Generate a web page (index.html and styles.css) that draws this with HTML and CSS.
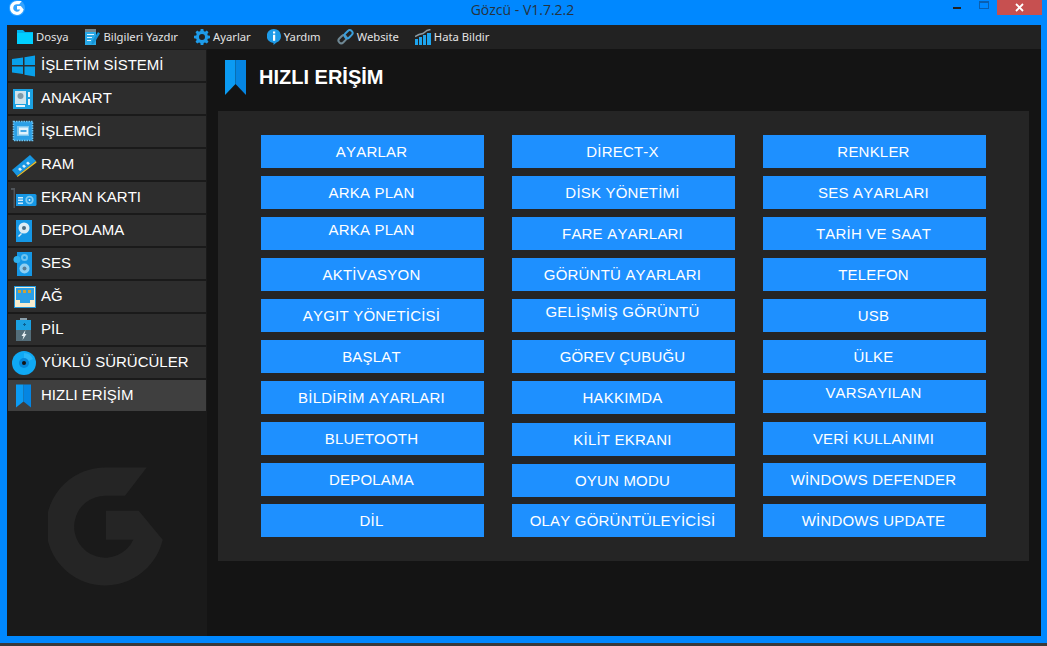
FILE: index.html
```html
<!DOCTYPE html>
<html lang="tr">
<head>
<meta charset="utf-8">
<title>Gözcü - V1.7.2.2</title>
<link rel="stylesheet" href="styles.css">
</head>
<body>
<div class="window">
  <header class="titlebar">
    <svg class="app-logo" viewBox="-10 -8 136 136"><circle cx="58" cy="60" r="68" fill="#35a4ff"/><path d="M58 .5H98.700L77 28.700H58a31 31 0 1 0 27.300 44H58V43.700h32.700l24 29A59 59 0 1 1 58 .5z" fill="#fff"/></svg>
    <div class="title">Gözcü - V1.7.2.2</div>
    <div class="controls">
      <span class="ctl-min"></span>
      <span class="ctl-max"></span>
      <span class="ctl-close"><svg viewBox="0 0 9 9" width="9" height="9"><path d="M1 1l7 7M8 1L1 8" stroke="#fff" stroke-width="1.800"/></svg></span>
    </div>
  </header>
  <div class="client">
    <nav class="menubar">
      <div class="menu-item"><svg width="16" height="14" viewBox="0 0 16 14"><path d="M0 0h6l2 2h8v12H0z" fill="#00b4ee"/><path d="M0 3h16v11H0z" fill="#00d0ff"/></svg><span>Dosya</span></div>
      <div class="menu-item"><svg width="16" height="16" viewBox="0 0 16 16"><path d="M1 2h11v14H1z" fill="#29a9e8"/><path d="M1 0h11v3H1z" fill="#71858f"/><path d="M3 5h7v1H3zM3 8h5v1H3zM3 11h4v1H3z" fill="#dff4ff"/><path d="M14 3l2 1.500-6 10-2.500 1 .3-3z" fill="#1593d6"/></svg><span>Bilgileri Yazdır</span></div>
      <div class="menu-item"><svg width="16" height="16" viewBox="0 0 16 16"><path d="M6.700 0h2.600l.4 2.100 1.300.6 1.800-1.200 1.700 1.800-1.200 1.800.5 1.300 2.200.4v2.500l-2.200.4-.5 1.300 1.200 1.800-1.700 1.800-1.800-1.200-1.300.6-.4 2H6.700l-.4-2-1.300-.6-1.800 1.200-1.700-1.800 1.200-1.800-.5-1.300L0 9.300V6.800l2.200-.4.5-1.300-1.200-1.800 1.700-1.800 1.800 1.200 1.300-.6zM8 5a3 3 0 1 0 0 6 3 3 0 0 0 0-6z" fill="#1e9be8"/></svg><span>Ayarlar</span></div>
      <div class="menu-item"><svg width="14" height="16" viewBox="0 0 14 16"><path d="M7 0a7 7 0 0 1 2.500 13.500L6.500 16v-2A7 7 0 0 1 7 0z" fill="#1e9be8"/><path d="M6 2.500h2.200v2H6zM6 5.800h2.200v6H6z" fill="#fff"/></svg><span>Yardım</span></div>
      <div class="menu-item"><svg width="17" height="16" viewBox="0 0 17 16"><rect x="1" y="7.500" width="9" height="5.500" rx="2.700" transform="rotate(-45 5.500 10.200)" fill="none" stroke="#6f8894" stroke-width="2"/><rect x="7" y="2.500" width="9" height="5.500" rx="2.700" transform="rotate(-45 11.500 5.200)" fill="none" stroke="#3a9fdc" stroke-width="2"/></svg><span>Website</span></div>
      <div class="menu-item"><svg width="16" height="16" viewBox="0 0 16 16"><path d="M0 10h3v6H0zM4 8h3v8H4zM8 6h3v10H8zM12 4h4v12h-4z" fill="#1ea5ee"/><path d="M0 7.500l4-2 4-1 4-3 3.500-1" fill="none" stroke="#8a9aa2" stroke-width="1.500"/></svg><span>Hata Bildir</span></div>
    </nav>
    <div class="body">
      <aside class="sidebar">
        <div class="side-item"><svg viewBox="0 0 26 26"><path d="M1 6l11-1.500V12H1zM13.500 4.300L24 2.500V12H13.500zM1 13.500h11V21L1 19.500zM13.500 13.500H24v10l-10.500-1.700z" fill="#08a0ea"/></svg><span>İŞLETİM SİSTEMİ</span></div>
        <div class="side-item"><svg viewBox="0 0 26 26"><path d="M2 3h20v20H2z" fill="#1ba1e2"/><path d="M4 5h11v13H4z" fill="#cfe3ec"/><circle cx="9.500" cy="10" r="3" fill="#7f9aa8"/><path d="M5 19h9v2H5zM17 6h2v5h-2zM17 13h2v6h-2z" fill="#e8f4fa"/></svg><span>ANAKART</span></div>
        <div class="side-item"><svg viewBox="0 0 26 26"><rect x="2.500" y="2.500" width="19" height="19" fill="#2a9fe6"/><rect x="2.500" y="2.500" width="19" height="19" fill="none" stroke="#6cc4f4" stroke-width="1.600" stroke-dasharray="1.500 1"/><path d="M6 7h12v10H6z" fill="#7cc6ef"/><path d="M8 8.500h9v7H8z" fill="#e2f2fb"/><path d="M9.500 11h6v2h-6z" fill="#45a8e6"/></svg><span>İŞLEMCİ</span></div>
        <div class="side-item"><svg viewBox="0 0 26 26"><path d="M1 18L19 3l6 6L6 24z" fill="#1796e2"/><path d="M6 24l19-15 .5 1.500L6.500 25z" fill="#e6c033"/><path d="M7 17l2 2 2-1.500-2-2zM11 14l2 2 2-1.500-2-2zM15 11l2 2 2-1.500-2-2z" fill="#d9eefa"/></svg><span>RAM</span></div>
        <div class="side-item"><svg viewBox="0 0 26 26"><path d="M0 3h4v20H2.500V5H0z" fill="#50555a"/><path d="M5 9h19a1.500 1.500 0 0 1 1.500 1.500v9a1.500 1.500 0 0 1-1.500 1.500H5z" fill="#1597e5"/><path d="M7 12h5v1.500H7zM7 14.500h5V16H7zM7 17.500h5V19H7z" fill="#cfeaf9"/><circle cx="18.500" cy="15" r="4.200" fill="#7ecbf3"/><circle cx="18.500" cy="15" r="2.400" fill="#1597e5"/><circle cx="18.500" cy="15" r="1" fill="#dff2fc"/></svg><span>EKRAN KARTI</span></div>
        <div class="side-item"><svg viewBox="0 0 26 26"><path d="M5 2h16v22H5z" fill="#1597e5"/><circle cx="13" cy="10" r="5.500" fill="#dcecf5"/><circle cx="13" cy="10" r="2" fill="#4d6d80"/><path d="M7 18l3-3 1 1-3 3z" fill="#dcecf5"/></svg><span>DEPOLAMA</span></div>
        <div class="side-item"><svg viewBox="0 0 26 26"><path d="M6 1h15v24H6z" fill="#1597e5"/><circle cx="13.500" cy="6.500" r="3.500" fill="#6ec4f0"/><circle cx="13.500" cy="6.500" r="1.500" fill="#1597e5"/><circle cx="13.500" cy="17.500" r="5" fill="#8fd0f3"/><circle cx="13.500" cy="17.500" r="2" fill="#5a7f96"/><circle cx="6" cy="8.500" r="3.500" fill="#2fb0ee"/></svg><span>SES</span></div>
        <div class="side-item"><svg viewBox="0 0 26 26"><path d="M3 2h22v22H3z" fill="#1f96dd"/><path d="M4 3h20v20H4z" fill="#f4ecd0"/><path d="M5 4h18v12h-4v3h-10v-3H5z" fill="#2a9fe6"/><path d="M7 6h3v3H7zM12 6h3v3h-3zM17 6h3v3h-3z" fill="#c9a23a"/></svg><span>AĞ</span></div>
        <div class="side-item"><svg viewBox="0 0 26 26"><path d="M9 1h7v2H9z" fill="#8aa0ac"/><path d="M5 3h15v10H5z" fill="#1ba1e2"/><path d="M5 13h15v11H5z" fill="#546e7a"/><path d="M12 7h1V6h1v1h1v1h-1v1h-1V8h-1z" fill="#0d5f8f"/><path d="M14.500 13l-4 6h2l-1 4 4-6h-2z" fill="#e8f1f5"/></svg><span>PİL</span></div>
        <div class="side-item"><svg viewBox="0 0 26 26"><circle cx="13" cy="13" r="12" fill="#0fa9f4"/><path d="M13 3a10 10 0 0 1 9 6l-9 4z" fill="#2ab6f7"/><circle cx="13" cy="13" r="5" fill="#0786d6"/><circle cx="13" cy="13" r="2" fill="#141414"/></svg><span>YÜKLÜ SÜRÜCÜLER</span></div>
        <div class="side-item active"><svg viewBox="0 0 26 26"><path d="M5 1.500h7.500v17L5 24.500z" fill="#0b9bf3"/><path d="M12.500 1.500H20v23l-7.500-6z" fill="#0585e2"/></svg><span>HIZLI ERİŞİM</span></div>
        <svg class="watermark" viewBox="0 0 116 120"><path d="M58 .5H98.700L77 28.700H58a31 31 0 1 0 27.300 44H58V43.700h32.700l24 29A59 59 0 1 1 58 .5z" fill="#252525"/></svg>
      </aside>
      <main class="main">
        <div class="page-head">
          <svg class="head-icon" viewBox="0 0 21 35"><path d="M0 0h10.500v24L0 35z" fill="#0b9bf3"/><path d="M10.500 0H21v35L10.500 24z" fill="#0585e2"/></svg>
          <h1>HIZLI ERİŞİM</h1>
        </div>
        <section class="panel">
          <div class="btn">AYARLAR</div>
          <div class="btn">ARKA PLAN</div>
          <div class="btn text-high">ARKA PLAN</div>
          <div class="btn">AKTİVASYON</div>
          <div class="btn">AYGIT YÖNETİCİSİ</div>
          <div class="btn">BAŞLAT</div>
          <div class="btn">BİLDİRİM AYARLARI</div>
          <div class="btn">BLUETOOTH</div>
          <div class="btn">DEPOLAMA</div>
          <div class="btn">DİL</div>
          <div class="btn">DİRECT-X</div>
          <div class="btn">DİSK YÖNETİMİ</div>
          <div class="btn">FARE AYARLARI</div>
          <div class="btn">GÖRÜNTÜ AYARLARI</div>
          <div class="btn text-high">GELİŞMİŞ GÖRÜNTÜ</div>
          <div class="btn">GÖREV ÇUBUĞU</div>
          <div class="btn">HAKKIMDA</div>
          <div class="btn lowered">KİLİT EKRANI</div>
          <div class="btn lowered">OYUN MODU</div>
          <div class="btn">OLAY GÖRÜNTÜLEYİCİSİ</div>
          <div class="btn">RENKLER</div>
          <div class="btn">SES AYARLARI</div>
          <div class="btn">TARİH VE SAAT</div>
          <div class="btn">TELEFON</div>
          <div class="btn">USB</div>
          <div class="btn">ÜLKE</div>
          <div class="btn raised text-high">VARSAYILAN</div>
          <div class="btn">VERİ KULLANIMI</div>
          <div class="btn">WİNDOWS DEFENDER</div>
          <div class="btn">WİNDOWS UPDATE</div>
        </section>
      </main>
    </div>
  </div>
  <div class="frame-bottom"></div>
  <div class="desktop-strip"></div>
</div>
</body>
</html>
```
FILE: styles.css
```css
* { box-sizing: border-box; }
html, body { margin: 0; height: 100%; overflow: hidden; }
body { background: #0088ff; font-family: "Liberation Sans", Arial, sans-serif; font-kerning: none; }
.window { height: 646px; display: flex; flex-direction: column; }
.titlebar { height: 25px; flex: none; display: flex; align-items: flex-start; }
.app-logo { width: 16px; height: 16px; margin: 0 0 0 9px; flex: none; }
.title { flex: 1; text-align: center; font: 14px/19px "Open Sans", sans-serif; color: #26323e; padding-left: 73px; }
.controls { display: flex; flex: none; width: 95px; align-items: flex-start; margin-right: 5px; }
.ctl-min { width: 8px; height: 2px; background: #222; margin: 7px 0 0 6px; }
.ctl-max { width: 10px; height: 8px; border: 1px solid #0a5fb0; border-top-width: 2px; margin: 1px 0 0 18px; }
.ctl-close { width: 45px; height: 15px; background: #c75050; margin-left: 8px; display: flex; align-items: center; justify-content: center; }
.client { margin: 0 6px 0 7px; height: 611px; flex: none; display: flex; flex-direction: column; background: #1a1a1a; }
.menubar { height: 24px; flex: none; background: #222; display: flex; align-items: center; padding-left: 10px; }
.menu-item { display: flex; align-items: center; gap: 3px; color: #e4e4e4; font: 11.250px/16px "Noto Sans", sans-serif; margin-right: 16px; }
.menu-item svg { flex: none; }
.body { flex: 1; display: flex; min-height: 0; }
.sidebar { width: 200px; flex: none; background: #1a1a1a; display: flex; flex-direction: column; gap: 2px; padding: 1px 1px 0 1px; }
.side-item { height: 31px; flex: none; background: #2d2d2d; display: flex; align-items: center; color: #fff; font-size: 15px; padding-left: 3px; }
.side-item span { padding-bottom: 2px; }
.side-item svg { width: 26px; height: 26px; flex: none; margin-right: 4px; }
.side-item.active { background: #3f3f3f; }
.watermark { width: 116px; height: 120px; margin: 54px 0 0 40px; flex: none; }
.main { flex: 1; background: #141414; padding: 11px 12px 0 11px; min-width: 0; }
.page-head { display: flex; align-items: center; height: 35px; margin-left: 7px; }
.head-icon { width: 21px; height: 35px; flex: none; }
.page-head h1 { margin: 0 0 0 13px; font-size: 20px; font-weight: bold; color: #fff; }
.panel { margin-top: 16px; height: 450px; background: #252525; padding: 24px 43px; display: grid; grid-template-rows: repeat(10, 33px); grid-template-columns: repeat(3, 223px); grid-auto-flow: column; column-gap: 28px; row-gap: 8px; }
.btn { background: #1e90ff; color: #fff; font-size: 15px; letter-spacing: .2px; display: flex; align-items: center; justify-content: center; padding-right: 2px; }
.btn.text-high { padding-bottom: 8px; }
.btn.raised { margin-top: -1px; margin-bottom: 1px; }
.btn.lowered { margin-top: 1px; margin-bottom: -1px; }
.frame-bottom { height: 7px; flex: none; }
.desktop-strip { height: 3px; flex: none; background: #3a3a3a; }
```
